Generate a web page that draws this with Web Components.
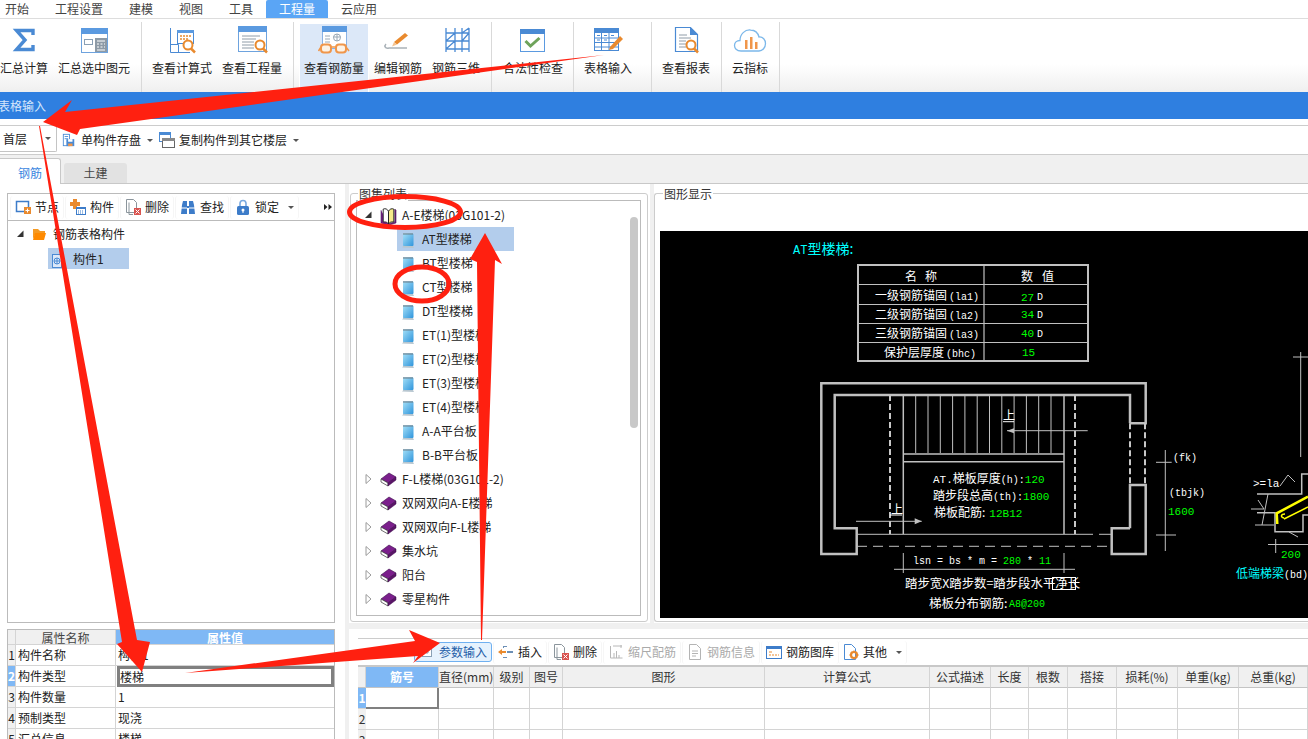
<!DOCTYPE html>
<html lang="zh-CN">
<head>
<meta charset="utf-8">
<title>表格输入</title>
<style>
    html, body { margin: 0; height: 100%; background: #fff; overflow: hidden; }
    body { font: 12px/16px "Noto Sans CJK SC", "Liberation Sans", sans-serif; color: #222; }
    #app { position: relative; width: 1308px; height: 739px; overflow: hidden; }
</style>
</head>
<body>
<div id="app">
    <menu-bar></menu-bar>
    <tool-ribbon>
        <ribbon-group style="width:147px;margin-left:-5px">
            <ribbon-button icon="sigma">汇总计算</ribbon-button>
            <ribbon-button icon="sumsel">汇总选中图元</ribbon-button>
        </ribbon-group>
        <ribbon-group style="width:152px;padding-left:5px">
            <ribbon-button icon="formula">查看计算式</ribbon-button>
            <ribbon-button icon="quantity">查看工程量</ribbon-button>
        </ribbon-group>
        <ribbon-group style="width:198px;padding-left:5px">
            <ribbon-button icon="glasses" active>查看钢筋量</ribbon-button>
            <ribbon-button icon="editbar">编辑钢筋</ribbon-button>
            <ribbon-button icon="scaffold">钢筋三维</ribbon-button>
        </ribbon-group>
        <ribbon-group style="width:82px;padding-left:6px">
            <ribbon-button icon="check">合法性检查</ribbon-button>
        </ribbon-group>
        <ribbon-group style="width:78px;padding-left:5px">
            <ribbon-button icon="table">表格输入</ribbon-button>
        </ribbon-group>
        <ribbon-group style="width:70px;padding-left:5px">
            <ribbon-button icon="report">查看报表</ribbon-button>
        </ribbon-group>
        <ribbon-group style="width:58px;padding-left:5px">
            <ribbon-button icon="cloud">云指标</ribbon-button>
        </ribbon-group>
    </tool-ribbon>
    <title-band>表格输入</title-band>
    <floor-bar></floor-bar>
    <module-tabs></module-tabs>
    <work-area>
        <div slot="left">
            <side-panel>
                <tool-strip style="padding-left:2px;margin-bottom:1px">
                    <tool-button icon="node">节点</tool-button>
                    <tool-button icon="comp">构件</tool-button>
                    <tool-button icon="del">删除</tool-button>
                    <tool-button icon="find">查找</tool-button>
                    <tool-button icon="lock" menu>锁定</tool-button>
                    <svg slot="end" width="8" height="6" viewBox="0 0 8 6"><path d="M0 0l3.500 3L0 6zM4.500 0L8 3 4.500 6z" fill="#222"/></svg>
                </tool-strip>
                <tree-row style="--indent:9px;--gap:7px" arrow="open" icon="folder" isize="14">钢筋表格构件</tree-row>
                <tree-row style="--indent:40px;--gap:11px;--pl:4px;--h:21px;--w:81px;margin-top:2px" icon="doc" isize="10" selected>构件1</tree-row>
            </side-panel>
        </div>
        <group-box slot="list" label="图集列表" style="margin:9px 0 0 1px;width:298px;height:429px;--pad:6px 6px 5px 5px;--lx:7px">
            <tree-box>
                <tree-row arrow="open" icon="bookopen">A-E楼梯(03G101-2)</tree-row>
                <tree-row style="--indent:40px;--gap:7px;--pl:4px;--w:117px" icon="note" isize="14" selected>AT型楼梯</tree-row>
                <tree-row style="--indent:40px;--gap:7px;--pl:4px" icon="note" isize="14">BT型楼梯</tree-row>
                <tree-row style="--indent:40px;--gap:7px;--pl:4px" icon="note" isize="14">CT型楼梯</tree-row>
                <tree-row style="--indent:40px;--gap:7px;--pl:4px" icon="note" isize="14">DT型楼梯</tree-row>
                <tree-row style="--indent:40px;--gap:7px;--pl:4px" icon="note" isize="14">ET(1)型楼梯</tree-row>
                <tree-row style="--indent:40px;--gap:7px;--pl:4px" icon="note" isize="14">ET(2)型楼梯</tree-row>
                <tree-row style="--indent:40px;--gap:7px;--pl:4px" icon="note" isize="14">ET(3)型楼梯</tree-row>
                <tree-row style="--indent:40px;--gap:7px;--pl:4px" icon="note" isize="14">ET(4)型楼梯</tree-row>
                <tree-row style="--indent:40px;--gap:7px;--pl:4px" icon="note" isize="14">A-A平台板</tree-row>
                <tree-row style="--indent:40px;--gap:7px;--pl:4px" icon="note" isize="14">B-B平台板</tree-row>
                <tree-row arrow="closed" icon="book">F-L楼梯(03G101-2)</tree-row>
                <tree-row arrow="closed" icon="book">双网双向A-E楼梯</tree-row>
                <tree-row arrow="closed" icon="book">双网双向F-L楼梯</tree-row>
                <tree-row arrow="closed" icon="book">集水坑</tree-row>
                <tree-row arrow="closed" icon="book">阳台</tree-row>
                <tree-row arrow="closed" icon="book">零星构件</tree-row>
            </tree-box>
        </group-box>
        <group-box slot="view" label="图形显示" open style="margin-top:9px;height:429px;--pad:37px 0 3px 5px;--lx:8px">
            <cad-drawing></cad-drawing>
        </group-box>
        <div slot="lower" style="padding-left:9px">
            <tool-strip style="border-top:1px solid #ccc;border-bottom:0;margin-top:9px">
                <gl-icon name="param" size="10" style="margin:0 9px 0 37px"></gl-icon>
                <tool-button icon="paramin" active>参数输入</tool-button>
                <tool-button icon="insert">插入</tool-button>
                <tool-button icon="del">删除</tool-button>
                <tool-button icon="ruler" disabled>缩尺配筋</tool-button>
                <tool-button icon="info" disabled>钢筋信息</tool-button>
                <tool-button icon="lib">钢筋图库</tool-button>
                <tool-button icon="other" menu style="margin-left:-2px">其他</tool-button>
            </tool-strip>
            <rebar-grid></rebar-grid>
        </div>
    </work-area>
    <red-marks></red-marks>
</div>

<script>
const ICONS = {
    sigma: '<path d="M25 10V5.500H8.500l8.500 9.500-8.500 9.500H25V20" fill="none" stroke="#4a8ad4" stroke-width="3.400"/>',
    sumsel: '<rect x="3.500" y="3.500" width="26" height="24" fill="#fff" stroke="#6ea3de"/><rect x="3" y="3" width="27" height="6" fill="#5b9ae0"/><rect x="6.500" y="14.500" width="8" height="5" fill="none" stroke="#8aa0b5"/><rect x="17" y="13" width="12" height="14" fill="#8d9aa6"/><path d="M19 16h8M19 19h2m1.500 0h2m1.500 0h1M19 22h2m1.500 0h2m1.500 0h1M19 25h8" stroke="#fff"/>',
    formula: '<path d="M4.500 3v24.500H24M4.500 19.500h8v8" fill="none" stroke="#4a8ad4"/><rect x="11.500" y="5.500" width="16" height="13" fill="#fff" stroke="#4a8ad4"/><rect x="11" y="5" width="17" height="3" fill="#5b9ae0"/><path d="M14 11h2m1 0h2m1 0h2m1 0h2M14 14h2m1 0h2m1 0h2" stroke="#e98a2e" stroke-width="1.500"/><circle cx="22" cy="20" r="4.500" fill="#fff" stroke="#e98a2e" stroke-width="2"/><path d="M25 23.500l4 4" stroke="#e98a2e" stroke-width="2.500"/>',
    quantity: '<rect x="2.500" y="1.500" width="28" height="25" fill="#fff" stroke="#6ea3de"/><rect x="2" y="1" width="29" height="6" fill="#5b9ae0"/><path d="M6 11h18M6 14h14M6 17h12M6 20h12M6 23h12" stroke="#8f9ca8"/><circle cx="24" cy="20" r="4.500" fill="#fff" stroke="#e98a2e" stroke-width="2"/><path d="M27 23.500l4 4" stroke="#e98a2e" stroke-width="2.500"/>',
    glasses: '<rect x="4.500" y="1.500" width="24" height="22" fill="#fff" stroke="#8ab2e4"/><rect x="4" y="1" width="25" height="6" fill="#5b9ae0"/><path d="M7 11h5M7 14h5M7 17h5M15 12h8M19 9v7" stroke="#9aa8b5"/><circle cx="19" cy="12.500" r="3.500" fill="none" stroke="#9aa8b5"/><rect x="3" y="19.500" width="10" height="8" rx="3" fill="#fdf3e6" stroke="#f0964a" stroke-width="2"/><rect x="18" y="19.500" width="10" height="8" rx="3" fill="#fdf3e6" stroke="#f0964a" stroke-width="2"/><path d="M13 22h5M3 22L.5 26M28 22l3 4" stroke="#f0964a" stroke-width="1.500" fill="none"/>',
    editbar: '<path d="M4 19c-2 2-1 5 3 4h18" fill="none" stroke="#aab2b8" stroke-width="1.500"/><path d="M12 17l11-9 3 2.500-11 9z" fill="#e98a2e"/><path d="M12 17l-2 4.500 5-2z" fill="#f4c38f"/>',
    scaffold: '<path d="M6 3v24M15 3v24M22 3v24M29 3v24M6 8h23M6 16h23M6 24h23M6 16l9-8M6 24l9-8M22 8l7-5M22 16l7-8" fill="none" stroke="#4a8ad4" stroke-width="1.300"/>',
    check: '<rect x="3.500" y="4.500" width="24" height="22" fill="#fff" stroke="#5b9ae0"/><rect x="3" y="4" width="25" height="5" fill="#4a8ad4"/><path d="M8.500 16l5 5 9-8" fill="none" stroke="#6ea35a" stroke-width="3"/>',
    table: '<rect x="2.500" y="3.500" width="24" height="22" fill="#fff" stroke="#4a8ad4"/><rect x="2" y="3" width="25" height="5" fill="#4a8ad4"/><path d="M2 13h25M2 17.500h25M2 22h25M9.500 8v17M17 8v17" stroke="#4a8ad4"/><path d="M5 10.500h3m4 0h3m4 0h3M5 15h3m4 0h3" stroke="#4a8ad4"/><path d="M18 22l10-11 3 3-10 10-4 1z" fill="#e98a2e"/>',
    report: '<path d="M5.500 2.500h15l7 7v17h-22z" fill="#fff" stroke="#4a8ad4" stroke-width="1.200"/><path d="M20 2l8 8h-8z" fill="#4a8ad4"/><path d="M9 10h8M9 13h12M9 16h7M9 19h7M9 22h7" stroke="#8f9ca8"/><circle cx="21" cy="20" r="4.500" fill="#fff" stroke="#e98a2e" stroke-width="2"/><path d="M24 23.500l4 4" stroke="#e98a2e" stroke-width="2.500"/>',
    cloud: '<path d="M7 26C2.500 26 .5 23 .5 20.500S2.500 15.500 6 15.500C6 9 11 4.500 16.500 5c4 .2 7.500 3 8.500 7 4-.5 6.500 3 6.500 6.500 0 4-3 7.500-6.500 7.500z" fill="#fff" stroke="#7cb8ea" stroke-width="1.300"/><path d="M11 15h2.500v9H11zM16 12h2.500v12H16zM21 17h2.500v7H21z" fill="#f0964a"/>',
    node: '<rect x="1.500" y="2.500" width="12" height="10" fill="#fff" stroke="#3d7cc9" stroke-width="1.500"/><rect x="9" y="8" width="7" height="7" fill="#e98a2e"/><path d="M12.500 9.500v4M10.500 11.500h4" stroke="#fff"/>',
    comp: '<path d="M3 0h4v3h3v4H7v3H3V7H0V3h3z" fill="#e98a2e"/><rect x="6.500" y="8.500" width="9" height="7" fill="#fff" stroke="#3d7cc9"/><rect x="6" y="8" width="10" height="2" fill="#3d7cc9"/><path d="M8 12h1m1 0h1m1 0h1M8 14h1m1 0h1m1 0h1" stroke="#3d7cc9"/>',
    del: '<path d="M1.500 .5h7l3 3v10h-10z" fill="#fff" stroke="#8b959c"/><path d="M4 3.500v12h4" fill="none" stroke="#8b959c"/><rect x="9" y="9" width="7" height="7" fill="#d9534f"/><path d="M10.500 10.500l4 4m0-4l-4 4" stroke="#fff"/>',
    find: '<path d="M2 6l1-4h4v5h2V2h4l1 4 1 9H9V9H7v6H1z" fill="#3d7cc9"/><path d="M1 9h6m2 0h6" stroke="#fff"/>',
    lock: '<path d="M5 7V4.500a3 3 0 0 1 6 0V7" fill="none" stroke="#7aa9df" stroke-width="1.600"/><rect x="2" y="7" width="12" height="9" rx="1.500" fill="#3d7cc9"/><circle cx="8" cy="11" r="1.500" fill="#fff"/><path d="M8 11v3" stroke="#fff"/>',
    folder: '<path d="M1 2h5l2 2h5v2H4L1 12z" fill="#f59a23"/><path d="M3 6h11l-2 7H1z" fill="#ff8a00"/>',
    doc: '<rect x=".5" y=".5" width="9" height="13" fill="#dce8f8" stroke="#4a8ad4"/><circle cx="5" cy="7" r="3" fill="none" stroke="#4a8ad4"/><path d="M5 4v6M2 7h6" stroke="#4a8ad4"/>',
    bookopen: '<path d="M1 3v12l7 2 7-2V3l-1-1v12l-6 2" fill="#7b1f8c" stroke="#3a0b4a" stroke-width=".6"/><path d="M3 2c2-1 4 0 5 2v12c-1-2-3-2-5-2z" fill="#fff" stroke="#222" stroke-width=".9"/><path d="M8 4c1-2 3-3 5-2v12c-2 0-4 0-5 2z" fill="#f5e98a" stroke="#222" stroke-width=".9"/>',
    book: '<path d="M1 8l8-6 7 4-8 6z" fill="#7b1f8c" stroke="#3a0b4a" stroke-width=".6"/><path d="M1 8l7 4v3l-7-4z" fill="#fff" stroke="#333" stroke-width=".7"/><path d="M8 12l8-6v3l-8 6z" fill="#5b1468" stroke="#3a0b4a" stroke-width=".5"/>',
    note: '<defs><linearGradient id="sky" x1="0" y1="0" x2="1" y2="1"><stop offset="0" stop-color="#a5e0f7"/><stop offset="1" stop-color="#2f95dc"/></linearGradient></defs><path d="M1 15.500l1-1V1h10v13l1 2z" fill="#b7c6d0"/><rect x="2" y="1.500" width="10.500" height="12.500" rx="1" fill="url(#sky)"/><path d="M3 1v2m2-2v2m2-2v2m2-2v2m2-2v2" stroke="#6b7c88"/>',
    save: '<rect x="1.500" y="1.500" width="7" height="13" fill="#fff" stroke="#4a8ad4"/><path d="M3 4h4M3 6.500h4" stroke="#4a8ad4"/><rect x="5" y="7" width="9" height="8" fill="#4a8ad4"/><rect x="7" y="7" width="5" height="3" fill="#fff"/><rect x="7" y="12" width="5" height="3" fill="#f0964a"/>',
    copy: '<rect x=".5" y=".5" width="11" height="9" fill="#fff" stroke="#4a8ad4"/><rect x="0" y="0" width="12" height="3" fill="#4a8ad4"/><rect x="3.500" y="6.500" width="12" height="9" fill="#fff" stroke="#666"/><rect x="3" y="6" width="13" height="3" fill="#888"/>',
    param: '<rect x=".5" y="5.500" width="9" height="4" fill="#fff" stroke="#bbb"/>',
    paramin: '<rect x="3.500" y="4.500" width="9" height="8" fill="#fff" stroke="#8aa0b5"/><path d="M6 8h4M8 6v4" stroke="#8aa0b5"/>',
    insert: '<path d="M5 2h4v1H6v1H5zM5 13h4v1H5zM9 7h6v2H9z" fill="#6c8fb5"/><path d="M0 8l4-3v2h4v2H4v2z" fill="#e98a2e"/>',
    ruler: '<path d="M2.500 2v12h12M5 2h9M13 1v3M6 14V9M8.500 14V7M11 14v-3" fill="none" stroke="#b8b8b8"/>',
    info: '<path d="M2.500 .5h7l4 4v11h-11z" fill="#fff" stroke="#b4b4b4"/><path d="M5 7h6M5 9.500h6M5 12h4" stroke="#b4b4b4"/>',
    lib: '<rect x=".5" y="2.500" width="15" height="12" fill="#fff" stroke="#3d7cc9"/><rect x="0" y="2" width="16" height="3" fill="#3d7cc9"/><path d="M3 8h3M3 11h2m1 0h2m1 0h2m1 0h1" stroke="#e98a2e"/>',
    other: '<path d="M1.500 .5h7l4 4v11h-11z" fill="#fff" stroke="#4a8ad4"/><circle cx="11" cy="11" r="3" fill="none" stroke="#e98a2e" stroke-width="2.200"/><path d="M11 6.500v2M11 13.500v2M6.500 11h2M13.500 11h2M8 8l1.300 1.300M14 14l-1.300-1.300M14 8l-1.300 1.300M8 14l1.300-1.300" stroke="#e98a2e" stroke-width="1.300"/>'
};
const VIEWBOX = { sigma: 32, sumsel: 32, formula: 32, quantity: 32, glasses: 32, editbar: 32, scaffold: 32, check: 32, table: 32, report: 32, cloud: 32, bookopen: 16, book: 17, note: 14, folder: 14, doc: 10 };

class GlIcon extends HTMLElement {
    connectedCallback() {
        const name = this.getAttribute('name');
        const size = this.getAttribute('size') || 16;
        const box = VIEWBOX[name] || 16;
        this.attachShadow({ mode: 'open' });
        this.shadowRoot.innerHTML = `
            <style>
                :host { display: inline-flex; flex: none; width: ${size}px; }
                svg { display: block; overflow: visible; }
            </style>
            <svg width="${size}" height="${size}" viewBox="0 0 ${box} ${box}">${ICONS[name] || ''}</svg>
        `;
    }
}
customElements.define('gl-icon', GlIcon);

class MenuBar extends HTMLElement {
    connectedCallback() {
        const items = ['开始', '工程设置', '建模', '视图', '工具', '工程量', '云应用'];
        this.attachShadow({ mode: 'open' });
        this.shadowRoot.innerHTML = `
            <style>
                :host { display: flex; height: 18px; border-bottom: 1px solid #ddd; padding-left: 0; margin-left: -8px; }
                span { padding: 0 13px; line-height: 18px; color: #444; font-size: 12px; }
                .on { background: #5aa5f5; color: #fff; border-radius: 2px 2px 0 0; }
            </style>
            ${items.map(t => `<span class="${t === '工程量' ? 'on' : ''}">${t}</span>`).join('')}
        `;
    }
}
customElements.define('menu-bar', MenuBar);

class ToolRibbon extends HTMLElement {
    connectedCallback() {
        this.attachShadow({ mode: 'open' });
        this.shadowRoot.innerHTML = `
            <style>
                :host { display: flex; height: 73px; background: linear-gradient(#fff 62%, #efefef); }
            </style>
            <slot></slot>
        `;
    }
}
customElements.define('tool-ribbon', ToolRibbon);

class RibbonGroup extends HTMLElement {
    connectedCallback() {
        this.attachShadow({ mode: 'open' });
        this.shadowRoot.innerHTML = `
            <style>
                :host { display: flex; flex: none; box-sizing: border-box; margin-top: 3px; height: 70px; border-right: 1px solid #d9d9d9; }
            </style>
            <slot></slot>
        `;
    }
}
customElements.define('ribbon-group', RibbonGroup);

class RibbonButton extends HTMLElement {
    connectedCallback() {
        this.attachShadow({ mode: 'open' });
        this.shadowRoot.innerHTML = `
            <style>
                :host { display: flex; flex-direction: column; align-items: center; margin-top: 2px; height: 68px; padding: 1px 5px 0; box-sizing: border-box; white-space: nowrap; color: #222; }
                :host([active]) { background: #dce8f8; box-shadow: inset 1px 0 #fff, inset -1px 0 #fff; }
                span { margin-top: 3px; line-height: 16px; }
            </style>
            <gl-icon name="${this.getAttribute('icon')}" size="32"></gl-icon>
            <span><slot></slot></span>
        `;
    }
}
customElements.define('ribbon-button', RibbonButton);

class TitleBand extends HTMLElement {
    connectedCallback() {
        this.attachShadow({ mode: 'open' });
        this.shadowRoot.innerHTML = `
            <style>
                :host { display: block; height: 27px; line-height: 27px; padding-left: 0; margin-bottom: 6px; background: #2f7fe0; color: #d5e6fb; text-indent: -2px; }
            </style>
            <slot></slot>
        `;
    }
}
customElements.define('title-band', TitleBand);

class FloorBar extends HTMLElement {
    connectedCallback() {
        this.attachShadow({ mode: 'open' });
        this.shadowRoot.innerHTML = `
            <style>
                :host { display: flex; align-items: center; height: 30px; box-sizing: border-box; border-top: 1px solid #ccc; border-bottom: 1px solid #ccc; }
                .floor { display: flex; align-items: center; justify-content: space-between; box-sizing: border-box; width: 57px; height: 26px; margin: 0 5px auto 0; padding: 0 5px 0 3px; border: 1px solid #c4c4c4; border-width: 0 1px 1px 0; border-radius: 0 0 2px 0; }
                .item { display: flex; align-items: center; gap: 5px; }
                .item + .item { gap: 4px; }
                .caret { width: 0; height: 0; border: 3px solid transparent; border-top: 3px solid #555; border-bottom: 0; }
                .item .caret { margin: 0 6px 0 1px; }
                .item:first-of-type gl-icon { margin-right: -1px; }
            </style>
            <div class="floor"><span>首层</span><i class="caret"></i></div>
            <div class="item"><gl-icon name="save" size="14"></gl-icon><span>单构件存盘</span><i class="caret"></i></div>
            <div class="item"><gl-icon name="copy" size="16"></gl-icon><span>复制构件到其它楼层</span><i class="caret" style="margin-left:2px"></i></div>
        `;
    }
}
customElements.define('floor-bar', FloorBar);

class ModuleTabs extends HTMLElement {
    connectedCallback() {
        this.attachShadow({ mode: 'open' });
        this.shadowRoot.innerHTML = `
            <style>
                :host { display: flex; align-items: flex-end; height: 29px; box-sizing: border-box; background: #f0f0f0; border-bottom: 1px solid #c8c8c8; }
                span { box-sizing: border-box; text-align: center; }
                .on { width: 61px; height: 26px; line-height: 27px; margin-bottom: -1px; background: #fff; color: #3a86e0; border: 1px solid #c8c8c8; border-width: 1px 1px 0 0; border-radius: 0 3px 0 0; }
                .off { width: 63px; height: 20px; line-height: 20px; margin-left: 3px; background: #e2e2e2; color: #444; border-radius: 3px 3px 0 0; }
            </style>
            <span class="on">钢筋</span><span class="off">土建</span>
        `;
    }
}
customElements.define('module-tabs', ModuleTabs);

class WorkArea extends HTMLElement {
    connectedCallback() {
        this.attachShadow({ mode: 'open' });
        this.shadowRoot.innerHTML = `
            <style>
                :host { display: grid; grid-template-columns: 345px 4px 1fr; height: 555px; overflow: hidden; }
                .bar { background: #f0f0f0; }
                .right { display: grid; grid-template-rows: 439px 6px 1fr; min-width: 0; }
                .top { display: grid; grid-template-columns: 301px 4px 1fr; min-width: 0; }
                .hbar { background: #f0f0f0; }
            </style>
            <slot name="left"></slot>
            <div class="bar"></div>
            <div class="right">
                <div class="top">
                    <slot name="list"></slot>
                    <div class="bar"></div>
                    <slot name="view"></slot>
                </div>
                <div class="hbar"></div>
                <slot name="lower"></slot>
            </div>
        `;
    }
}
customElements.define('work-area', WorkArea);

class SidePanel extends HTMLElement {
    connectedCallback() {
        this.attachShadow({ mode: 'open' });
        this.shadowRoot.innerHTML = `
            <style>
                :host { display: block; margin-left: 7px; width: 328px; }
                .top { box-sizing: border-box; height: 430px; margin-top: 9px; border: 1px solid #bbb; }
                .low { margin-top: 6px; }
            </style>
            <div class="top"><slot></slot></div>
            <div class="low"><prop-grid></prop-grid></div>
        `;
    }
}
customElements.define('side-panel', SidePanel);

class ToolStrip extends HTMLElement {
    connectedCallback() {
        this.attachShadow({ mode: 'open' });
        this.shadowRoot.innerHTML = `
            <style>
                :host { display: flex; align-items: center; height: 27px; box-sizing: border-box; border-bottom: 1px solid #bbb; }
                .end { margin-left: auto; padding-right: 2px; line-height: 0; }
            </style>
            <slot></slot><div class="end"><slot name="end"></slot></div>
        `;
    }
}
customElements.define('tool-strip', ToolStrip);

class ToolButton extends HTMLElement {
    connectedCallback() {
        const menu = this.hasAttribute('menu');
        this.attachShadow({ mode: 'open' });
        this.shadowRoot.innerHTML = `
            <style>
                :host { display: inline-flex; align-items: center; gap: 4px; box-sizing: border-box; height: 23px; padding: 0 4px; margin-right: 1px; border: 1px solid #f6f6f6; border-width: 0 1px; border-radius: 3px; white-space: nowrap; color: #222; }
                :host([disabled]) { color: #aaa; }
                :host([active]) { height: 20px; border: 1px solid #6fb0f0; background: #e6f2fd; color: #1f5ea8; }
                .caret { width: 0; height: 0; margin-left: 5px; border: 3px solid transparent; border-top-color: #555; border-bottom: 0; }
            </style>
            <gl-icon name="${this.getAttribute('icon')}" size="16"></gl-icon><slot></slot>${menu ? '<i class="caret"></i>' : ''}
        `;
    }
}
customElements.define('tool-button', ToolButton);

class TreeRow extends HTMLElement {
    connectedCallback() {
        const arrow = this.getAttribute('arrow');
        const isize = this.getAttribute('isize') || 17;
        const tri = arrow === 'open'
            ? '<path d="M6.500 1.500v6.500H0z" fill="#333"/>'
            : '<path d="M1 .5l5 4.500-5 4.500z" fill="#fff" stroke="#9a9a9a"/>';
        this.attachShadow({ mode: 'open' });
        this.shadowRoot.innerHTML = `
            <style>
                :host { display: flex; align-items: center; height: var(--h, 24px); padding-left: var(--indent, 8px); white-space: nowrap; color: #222; }
                svg { display: block; flex: none; margin-right: 8px; }
                .body { display: inline-flex; align-items: center; box-sizing: border-box; min-width: var(--w, 0); height: 100%; gap: var(--gap, 5px); padding: 0 4px 0 var(--pl, 0); }
                :host([selected]) .body { background: #b3cdec; }
            </style>
            ${arrow ? `<svg width="7" height="10" viewBox="0 0 7 10">${tri}</svg>` : ''}
            <div class="body"><gl-icon name="${this.getAttribute('icon')}" size="${isize}"></gl-icon><slot></slot></div>
        `;
    }
}
customElements.define('tree-row', TreeRow);

class TreeBox extends HTMLElement {
    connectedCallback() {
        this.attachShadow({ mode: 'open' });
        this.shadowRoot.innerHTML = `
            <style>
                :host { display: flex; box-sizing: border-box; height: 100%; border: 1px solid #bbb; background: #fff; overflow: hidden; }
                .rows { flex: 1; padding-top: 2px; min-width: 0; }
                .track { flex: none; width: 11px; padding: 16px 2px 0 1px; box-sizing: border-box; }
                .thumb { height: 211px; border-radius: 4px; background: #c8c8c8; }
            </style>
            <div class="rows"><slot></slot></div>
            <div class="track"><div class="thumb"></div></div>
        `;
    }
}
customElements.define('tree-box', TreeBox);

class GroupBox extends HTMLElement {
    connectedCallback() {
        this.attachShadow({ mode: 'open' });
        this.shadowRoot.innerHTML = `
            <style>
                :host { display: block; position: relative; box-sizing: border-box; border: 1px solid #ccc; border-radius: 3px; min-width: 0; }
                :host([open]) { border-right: 0; border-radius: 3px 0 0 3px; }
                .legend { position: absolute; left: var(--lx, 8px); top: -8px; padding: 0 1px; background: #fff; line-height: 16px; color: #333; }
                .inner { box-sizing: border-box; height: 100%; padding: var(--pad, 6px); }
            </style>
            <div class="legend">${this.getAttribute('label')}</div>
            <div class="inner"><slot></slot></div>
        `;
    }
}
customElements.define('group-box', GroupBox);

class PropGrid extends HTMLElement {
    connectedCallback() {
        const rows = [['构件名称', '构件1'], ['构件类型', '楼梯'], ['构件数量', '1'], ['预制类型', '现浇'], ['汇总信息', '楼梯']];
        this.attachShadow({ mode: 'open' });
        this.shadowRoot.innerHTML = `
            <style>
                :host { display: grid; grid-template-columns: 8px 100px 1fr; grid-auto-rows: 21px; grid-template-rows: 15px; box-sizing: border-box; border: 1px solid #bbb; border-bottom: 0; color: #222; }
                div { box-sizing: border-box; border-right: 1px solid #d4d4d4; border-bottom: 1px solid #d4d4d4; line-height: 20px; padding-left: 2px; white-space: nowrap; overflow: hidden; }
                .hd { background: #f0f0f0; text-align: center; padding: 0; line-height: 15px; color: #444; }
                .hd.sel { background: #7fb8f5; color: #fff; font-weight: 700; border-right: 0; }
                .num { background: #f0f0f0; padding: 0; text-align: center; font-size: 12px; }
                .num.sel { background: #7fb8f5; color: #fff; font-weight: 700; }
                .val { border-right: 0; }
                .val.active { border: 3px solid #808080; line-height: 15px; padding-left: 0; margin-left: 1px; background: #fff; }
            </style>
            <div class="hd"></div><div class="hd">属性名称</div><div class="hd sel">属性值</div>
            ${rows.map((r, i) => `
                <div class="num ${i === 1 ? 'sel' : ''}">${i + 1}</div>
                <div>${r[0]}</div>
                <div class="val ${i === 1 ? 'active' : ''}">${r[1]}</div>
            `).join('')}
        `;
    }
}
customElements.define('prop-grid', PropGrid);

class RebarGrid extends HTMLElement {
    connectedCallback() {
        const cols = [['筋号', 73], ['直径(mm)', 55], ['级别', 36], ['图号', 33], ['图形', 202], ['计算公式', 165], ['公式描述', 61], ['长度', 38], ['根数', 39], ['搭接', 49], ['损耗(%)', 61], ['单重(kg)', 61], ['总重(kg)', 69]];
        const template = '8px ' + cols.map(c => c[1] + 'px').join(' ');
        let rows = '';
        for (let r = 1; r <= 3; r++) {
            rows += `<div class="num ${r === 1 ? 'sel' : ''}">${r}</div>`;
            rows += cols.map((c, i) => `<div class="${r === 1 && i === 0 ? 'active' : ''}"></div>`).join('');
        }
        this.attachShadow({ mode: 'open' });
        this.shadowRoot.innerHTML = `
            <style>
                :host { display: grid; grid-template-columns: ${template}; grid-auto-rows: 21px; border-top: 2px solid #c8c8c8; margin-top: 0; color: #333; }
                div { box-sizing: border-box; border-right: 1px solid #d4d4d4; border-bottom: 1px solid #d4d4d4; text-align: center; white-space: nowrap; overflow: hidden; line-height: 20px; }
                .hd { background: #f0f0f0; border-bottom-color: #c4c4c4; }
                .hd.sel { background: #7fb8f5; color: #fff; font-weight: 700; }
                .num { background: #f0f0f0; font-size: 12px; border-right: 0; }
                .num.sel { background: #7fb8f5; color: #fff; font-weight: 700; }
                .active { border: 2px solid #808080; border-width: 0 2px 2px 0; }
            </style>
            <div class="hd"></div>
            ${cols.map((c, i) => `<div class="hd ${i === 0 ? 'sel' : ''}">${c[0]}</div>`).join('')}
            ${rows}
        `;
    }
}
customElements.define('rebar-grid', RebarGrid);

class CadDrawing extends HTMLElement {
    connectedCallback() {
        const treads = [];
        for (let i = 0; i < 12; i++) treads.push(`M${(915.7 + i * 12.3).toFixed(1)} 395V453`);
        this.attachShadow({ mode: 'open' });
        this.shadowRoot.innerHTML = `
            <style>
                :host { display: block; height: 100%; background: #000; overflow: hidden; }
                svg { display: block; width: 100%; height: 100%; }
                text { font-family: "Noto Sans CJK SC", "Liberation Mono", monospace; font-size: 12px; fill: #fff; white-space: pre; }
                .m { font-family: "Liberation Mono", "Noto Sans CJK SC", monospace; font-size: 10px; }
                .g { fill: #00ff00; }
                .c { fill: #00ffff; }
                .w { fill: none; stroke: #c0c0c0; stroke-width: 2.500; }
                .t { fill: none; stroke: #c0c0c0; stroke-width: 1; }
                .d { fill: none; stroke: #c8c8c8; stroke-width: 2; stroke-dasharray: 6 3; }
                .s { fill: none; stroke: #c0c0c0; stroke-width: 1.500; }
            </style>
            <svg viewBox="660 231 648 387" preserveAspectRatio="xMinYMin">
                <text x="793" y="254" class="c" style="font-size:14px"><tspan class="m" style="font-size:12px">AT</tspan>型楼梯:</text>

                <rect x="858" y="265" width="230" height="96" class="w" style="stroke-width:2"/>
                <path d="M984 265V361M858 284.500H1088M858 304.500H1088M858 323.500H1088M858 342.500H1088" class="t" style="stroke-width:1.200"/>
                <text x="905" y="281">名</text><text x="925" y="281">称</text>
                <text x="1021" y="281">数</text><text x="1042" y="281">值</text>
                <text x="875" y="300">一级钢筋锚固<tspan class="m" dx="2">(la1)</tspan></text>
                <text x="875" y="319">二级钢筋锚固<tspan class="m" dx="2">(la2)</tspan></text>
                <text x="875" y="338">三级钢筋锚固<tspan class="m" dx="2">(la3)</tspan></text>
                <text x="884" y="357">保护层厚度<tspan class="m" dx="2">(bhc)</tspan></text>
                <text x="1021" y="301" class="m g" style="font-size:11px">27</text><text x="1037" y="300" class="m">D</text>
                <text x="1021" y="318" class="m g" style="font-size:11px">34</text><text x="1037" y="318" class="m">D</text>
                <text x="1021" y="337" class="m g" style="font-size:11px">40</text><text x="1037" y="337" class="m">D</text>
                <text x="1022" y="356" class="m g" style="font-size:11px">15</text>

                <path d="M1130 423.300V395H834.700V528.300H856.700V554H821.300V383.300H1145.700V423.300H1130" class="w"/>
                <path d="M1130 528.300V485H1145.700V554H1111.700V528.300H1130" class="w"/>
                <path d="M1130 423.300V485M1145 423.300V485" class="d"/>
                <path d="M890 395V534M1075 395V534" class="d"/>
                <path d="M903.300 395V534M1064 395V534" class="s"/>
                <path d="${treads.join('')}" class="t"/>
                <path d="M903.300 454H1064M903.300 461.700H1064" class="s"/>
                <path d="M857 534.300H1093M1099 534.300H1111" class="t"/>
                <path d="M857 546.300H1111" class="t" style="stroke-dasharray:10 6"/>
                <path d="M1007 430.700H1087.700M856 521.300H921.700" class="t"/>
                <path d="M1007 430.700l7-2.500v5zM921.700 521.300l-7-3v6z" fill="#c0c0c0"/>
                <path d="M1003 421.700H1014M890 515H902" stroke="#fff" fill="none"/>
                <text x="1003" y="420">上</text>
                <text x="891" y="514">上</text>

                <text x="933" y="483"><tspan class="m" style="font-size:11px">AT.</tspan>梯板厚度<tspan class="m">(h):</tspan><tspan class="m g" style="font-size:11px">120</tspan></text>
                <text x="933" y="500">踏步段总高<tspan class="m">(th):</tspan><tspan class="m g" style="font-size:11px">1800</tspan></text>
                <text x="934" y="517">梯板配筋:<tspan class="m g" style="font-size:11px" dx="4">12B12</tspan></text>

                <path d="M903.300 553V573M1064 553V573M894 569.300H1075" class="t"/>
                <text x="913" y="564" class="m">lsn = bs * m =</text>
                <text x="1003" y="564" class="m g">280</text><text x="1027" y="564" class="m">*</text><text x="1039" y="564" class="m g">11</text>
                <text x="905" y="588" style="font-size:12.400px">踏步宽X踏步数=踏步段水平净长</text>
                <rect x="1052.500" y="577.500" width="23" height="12" fill="none" stroke="#fff"/>
                <text x="929" y="608" style="font-size:12.500px">梯板分布钢筋:</text>
                <text x="1009" y="607" class="m g">A8@200</text>

                <path d="M1165.300 450V551M1156 462.300H1171.700M1156 535H1176" class="t"/>
                <text x="1173" y="461" class="m">(fk)</text>
                <text x="1169" y="496" class="m">(tbjk)</text>
                <text x="1168" y="515" class="m g" style="font-size:11px">1600</text>

                <path d="M1300.700 352V457M1293 357H1308" class="t"/>
                <text x="1253" y="487" class="m" style="font-size:11px">&gt;=la</text>
                <path d="M1257 494H1301.700V474H1308M1257 512.700H1275V531.700H1303V515H1308" class="s"/>
                <path d="M1277.300 524L1276.700 513.300L1308 496.700" fill="none" stroke="#ffff00" stroke-width="2.500"/>
                <path d="M1284 518C1280 517 1281 514 1285 514M1284 519L1308 507" fill="none" stroke="#ffff00" stroke-width="1.500"/>
                <path d="M1251 509H1264L1258 500M1268 494L1262 525M1255 525H1274M1295 482L1288 475L1280 486M1289 532L1298 537" class="t"/>
                <path d="M1268 544.500H1308M1275.700 539V553" class="t"/>
                <text x="1281" y="558" class="m g" style="font-size:11px">200</text>
                <text x="1236" y="578" class="c">低端梯梁<tspan class="m" style="fill:#fff">(bd)</tspan></text>
            </svg>
        `;
    }
}
customElements.define('cad-drawing', CadDrawing);

class RedMarks extends HTMLElement {
    connectedCallback() {
        this.attachShadow({ mode: 'open' });
        this.shadowRoot.innerHTML = `
            <style>
                :host { position: absolute; left: 0; top: 0; width: 1308px; height: 739px; pointer-events: none; }
                svg { display: block; }
                .arrow { fill: #ff2010; }
                .ring { fill: none; stroke: #ff2010; stroke-width: 5; }
            </style>
            <svg width="1308" height="739" viewBox="0 0 1308 739">
                <polygon class="arrow" points="604,55 65,112 72,100 43,122 77,135 80,129"/>
                <polygon class="arrow" points="39,126 122,642 117,644 142,672 150,642 137,640 40,126"/>
                <polygon class="arrow" points="185,673 418,656 413,663 440,643 409,630 415,641"/>
                <polygon class="arrow" points="481,640 477,262 470,259 485,233 502,264 495,260 482,640"/>
                <ellipse class="ring" cx="405" cy="212" rx="55.500" ry="15.500"/>
                <ellipse class="ring" cx="422" cy="284" rx="27" ry="17"/>
            </svg>
        `;
    }
}
customElements.define('red-marks', RedMarks);
</script>
</body>
</html>
